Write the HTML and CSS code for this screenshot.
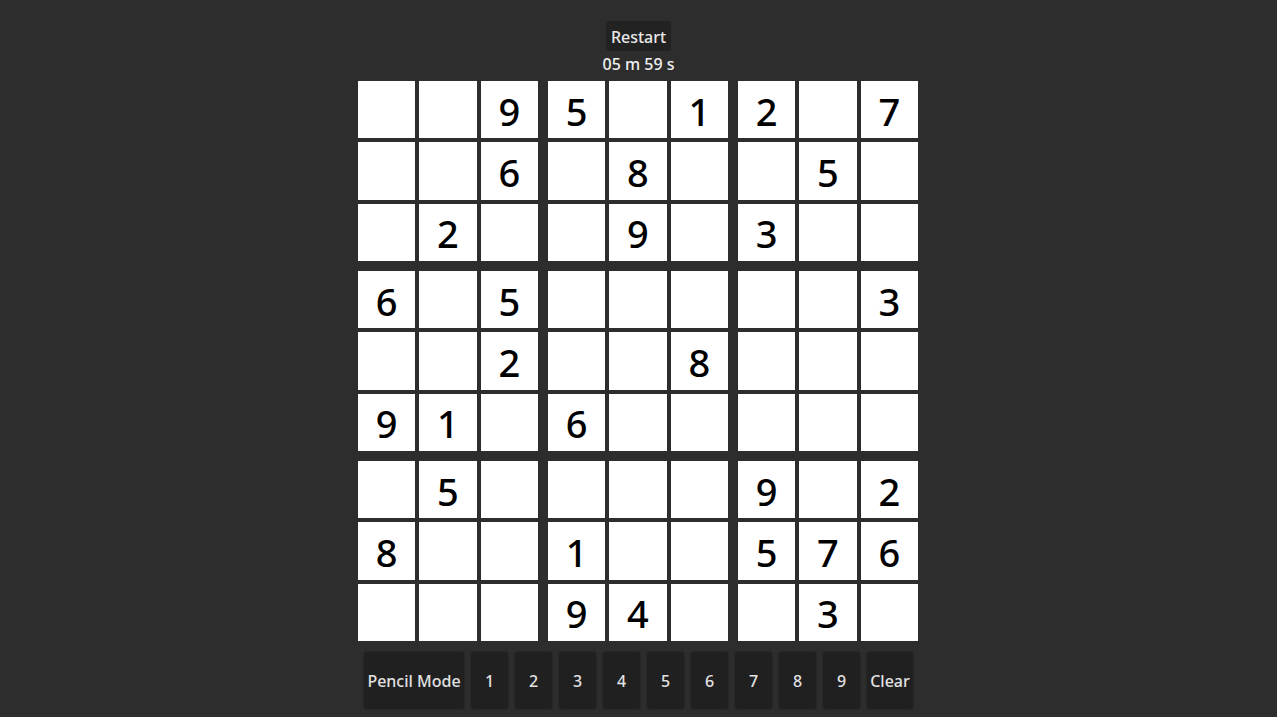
FILE: index.html
```html
<!DOCTYPE html>
<html lang="en">
<head>
<meta charset="utf-8">
<title>Sudoku</title>
<link rel="stylesheet" href="styles.css">
</head>
<body>
<main class="app">
  <button class="restart">Restart</button>
  <div class="timer">05 m 59 s</div>
  <div class="board">
    <div class="box"><div class="cell"></div><div class="cell"></div><div class="cell">9</div><div class="cell"></div><div class="cell"></div><div class="cell">6</div><div class="cell"></div><div class="cell">2</div><div class="cell"></div></div>
    <div class="box"><div class="cell">5</div><div class="cell"></div><div class="cell">1</div><div class="cell"></div><div class="cell">8</div><div class="cell"></div><div class="cell"></div><div class="cell">9</div><div class="cell"></div></div>
    <div class="box"><div class="cell">2</div><div class="cell"></div><div class="cell">7</div><div class="cell"></div><div class="cell">5</div><div class="cell"></div><div class="cell">3</div><div class="cell"></div><div class="cell"></div></div>
    <div class="box"><div class="cell">6</div><div class="cell"></div><div class="cell">5</div><div class="cell"></div><div class="cell"></div><div class="cell">2</div><div class="cell">9</div><div class="cell">1</div><div class="cell"></div></div>
    <div class="box"><div class="cell"></div><div class="cell"></div><div class="cell"></div><div class="cell"></div><div class="cell"></div><div class="cell">8</div><div class="cell">6</div><div class="cell"></div><div class="cell"></div></div>
    <div class="box"><div class="cell"></div><div class="cell"></div><div class="cell">3</div><div class="cell"></div><div class="cell"></div><div class="cell"></div><div class="cell"></div><div class="cell"></div><div class="cell"></div></div>
    <div class="box"><div class="cell"></div><div class="cell">5</div><div class="cell"></div><div class="cell">8</div><div class="cell"></div><div class="cell"></div><div class="cell"></div><div class="cell"></div><div class="cell"></div></div>
    <div class="box"><div class="cell"></div><div class="cell"></div><div class="cell"></div><div class="cell">1</div><div class="cell"></div><div class="cell"></div><div class="cell">9</div><div class="cell">4</div><div class="cell"></div></div>
    <div class="box"><div class="cell">9</div><div class="cell"></div><div class="cell">2</div><div class="cell">5</div><div class="cell">7</div><div class="cell">6</div><div class="cell"></div><div class="cell">3</div><div class="cell"></div></div>
  </div>
  <div class="controls">
    <button class="ctl ctl-wide">Pencil Mode</button>
    <button class="ctl">1</button>
    <button class="ctl">2</button>
    <button class="ctl">3</button>
    <button class="ctl">4</button>
    <button class="ctl">5</button>
    <button class="ctl">6</button>
    <button class="ctl">7</button>
    <button class="ctl">8</button>
    <button class="ctl">9</button>
    <button class="ctl ctl-clear">Clear</button>
  </div>
</main>
</body>
</html>
```

FILE: styles.css
```css
html, body {
  margin: 0;
  padding: 0;
  background: #2d2d2d;
  height: 100%;
}
body {
  font-family: "Noto Sans", "Open Sans", sans-serif;
  color: #e4e4e4;
  font-size: 16px;
  font-weight: 500;
}
.app {
  display: flex;
  flex-direction: column;
  align-items: center;
  padding-top: 21px;
}
.restart {
  font-family: inherit;
  font-weight: 500;
  font-size: 16px;
  line-height: 22px;
  color: #e8e8e8;
  background: #222222;
  border: none;
  border-radius: 3px;
  padding: 5px 5px 3px;
  margin: 0;
}
.timer {
  margin-top: 2px;
  line-height: 22px;
  font-size: 16px;
  color: #f0f0f0;
}
.board {
  margin-top: 6px;
  margin-right: 1px;
  display: grid;
  grid-template-columns: repeat(3, 180px);
  grid-template-rows: repeat(3, 180px);
  gap: 10px;
}
.box {
  display: grid;
  grid-template-columns: repeat(3, 1fr);
  grid-template-rows: repeat(3, 1fr);
  gap: 4px;
}
.cell {
  background: #ffffff;
  color: #000000;
  display: flex;
  align-items: center;
  justify-content: center;
  font-size: 38px;
  font-weight: 500;
  line-height: 1;
  padding-top: 2px;
  box-sizing: border-box;
}
.controls {
  margin-top: 10px;
  display: flex;
  gap: 5px;
}
.ctl {
  font-family: inherit;
  font-weight: 500;
  font-size: 16px;
  color: #e2e2e2;
  background: #202020;
  border: 1px solid #262626;
  border-radius: 4px;
  height: 59px;
  width: 39px;
  padding: 0;
  margin: 0;
  white-space: nowrap;
}
.ctl-wide {
  width: 102px;
}
.ctl-clear {
  width: 48px;
}
```
